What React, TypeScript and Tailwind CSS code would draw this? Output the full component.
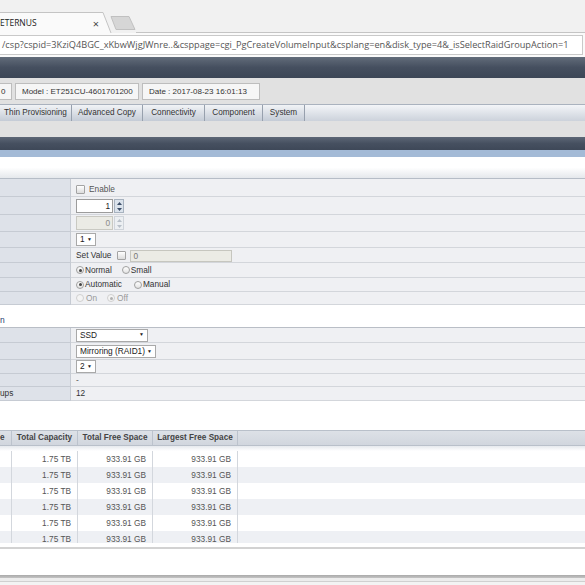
import React from "react";

const Up = ({ c = "#3d4f69" }: { c?: string }) => (
  <svg width="5" height="3" viewBox="0 0 5 3"><path d="M0 3 L2.5 0 L5 3Z" fill={c} /></svg>
);
const Down = ({ c = "#3d4f69" }: { c?: string }) => (
  <svg width="5" height="3" viewBox="0 0 5 3"><path d="M0 0 L2.5 3 L5 0Z" fill={c} /></svg>
);

function Spin({ value, disabled }: { value: string; disabled?: boolean }) {
  return (
    <div className="flex items-center">
      <div
        className={
          disabled
            ? "w-[37px] h-[14px] border border-[#c9c9c2] bg-[#ebebe5] text-[#8a8a8a] text-right pr-[2px] text-[8.3px] leading-[12px]"
            : "w-[37px] h-[14px] border border-[#9c9c9c] bg-white text-[#222] text-right pr-[2px] text-[8.3px] leading-[12px]"
        }
      >
        {value}
      </div>
      <div
        className={
          disabled
            ? "ml-[1px] w-[10px] h-[14px] flex flex-col border border-[#cfd4da] bg-[#eceff2]"
            : "ml-[1px] w-[10px] h-[14px] flex flex-col border border-[#a7b2bf] bg-[#dbe3ec]"
        }
      >
        <div className="flex-1 flex items-center justify-center">
          <Up c={disabled ? "#b8bfc8" : "#3d4f69"} />
        </div>
        <div className="flex-1 flex items-center justify-center">
          <Down c={disabled ? "#b8bfc8" : "#3d4f69"} />
        </div>
      </div>
    </div>
  );
}

function Check() {
  return <div className="w-[9px] h-[9px] rounded-[1px] border border-[#a3a3a3] bg-linear-to-b from-white to-[#dcdcdc]" />;
}

function Radio({ checked, disabled }: { checked?: boolean; disabled?: boolean }) {
  return (
    <div
      className={
        disabled
          ? "w-[8px] h-[8px] rounded-full border border-[#d0d0d0] bg-[#f4f4f4] flex items-center justify-center"
          : "w-[8px] h-[8px] rounded-full border border-[#a0a0a0] bg-linear-to-b from-white to-[#e2e2e2] flex items-center justify-center"
      }
    >
      {checked && <div className={disabled ? "w-[3px] h-[3px] rounded-full bg-[#b0b0b0]" : "w-[3px] h-[3px] rounded-full bg-[#444]"} />}
    </div>
  );
}

function Select({ text, w }: { text: string; w: string }) {
  return (
    <div className={`${w} h-[13px] border border-[#a9a9a9] bg-white flex items-center justify-between px-[3px] text-[8.3px] text-[#222]`}>
      <span>{text}</span>
      <span className="text-[5px] text-[#222]">▼</span>
    </div>
  );
}

function Row({ h, label, children, pad }: { h: string; label?: string; children?: React.ReactNode; pad?: string }) {
  return (
    <div className={`${h} flex`}>
      <div className="w-[71px] shrink-0 bg-[#dee2e9] border-b border-r border-[#c6cbd3] text-[8.3px] text-[#333] flex items-center">
        {label}
      </div>
      <div className={`flex-1 bg-[#eff0f3] border-b border-[#d3d6db] flex items-center pl-[5px] gap-[4px] text-[8.3px] text-[#444] ${pad ?? ""}`}>
        {children}
      </div>
    </div>
  );
}

const cols = ["w-[12px]", "w-[66px]", "w-[75px]", "w-[85px]"];

export default function App() {
  const rows = [0, 1, 2, 3, 4, 5];
  return (
    <div className="w-[585px] h-[585px] overflow-hidden bg-white font-['Liberation_Sans',Arial,sans-serif]">
      {/* browser tab strip */}
      <div className="h-[33px] bg-[#f1f1f1] flex items-end font-['Open_Sans',sans-serif]">
        <div className="w-[100px] h-[21px] bg-[#fafafa] border-t border-[#c4c4c4] flex items-center text-[8.5px] text-[#222]">
          <span>ETERNUS</span>
          <span className="ml-auto mr-[1px] text-[11px] text-[#444] leading-none">×</span>
        </div>
        <svg width="12" height="21" viewBox="0 0 12 21" className="shrink-0">
          <path d="M0 0.5 H3 L11 21 H0 Z" fill="#fafafa" />
          <path d="M0 0.5 H3 L11 21" fill="none" stroke="#c4c4c4" />
        </svg>
        <svg width="26" height="14" viewBox="0 0 26 14" className="shrink-0 mb-[3px] -ml-[2px]">
          <path d="M1 0.5 H19 L25 13.5 H6 Z" fill="#d6d6d6" stroke="#c0c0c0" />
        </svg>
        <div className="flex-1 h-[1px] bg-[#c4c4c4]" />
      </div>
      {/* address bar */}
      <div className="h-[24px] bg-[#fafafa] flex items-center pr-[2px]">
        <div className="w-full h-[20px] bg-white border border-l-0 border-[#c9c9c9] flex items-center pl-[2px] text-[9.2px] text-[#555] font-['Open_Sans',sans-serif] whitespace-nowrap overflow-hidden">
          /csp?cspid=3KziQ4BGC_xKbwWjgJWnre..&amp;csppage=cgi_PgCreateVolumeInput&amp;csplang=en&amp;disk_type=4&amp;_isSelectRaidGroupAction=1
        </div>
      </div>
      {/* navy header */}
      <div className="h-[21px] bg-linear-to-b from-[#626c7a] via-[#454f5f] to-[#3c4656]" />
      {/* gray area */}
      <div className="h-[59px] bg-[#e1e1e1] pt-[5px]">
        <div className="h-[17px] flex gap-[3px] text-[8px] text-[#333]">
          <div className="w-[12px] h-full bg-[#f6f6f6] border border-l-0 border-[#bdbdbd] flex items-center pl-[1px]">0</div>
          <div className="w-[124px] h-full bg-[#f6f6f6] border border-[#bdbdbd] flex items-center pl-[6px]">Model : ET251CU-4601701200</div>
          <div className="w-[118px] h-full bg-[#f6f6f6] border border-[#bdbdbd] flex items-center pl-[6px]">Date : 2017-08-23 16:01:13</div>
        </div>
        <div className="mt-[4px] h-[17px] flex text-[8.2px] text-[#333] border-t border-[#aab2be]">
          {[
            ["Thin Provisioning", "w-[72px]"],
            ["Advanced Copy", "w-[71px]"],
            ["Connectivity", "w-[62px]"],
            ["Component", "w-[58px]"],
            ["System", "w-[42px]"],
          ].map(([t, w]) => (
            <div key={t} className={`${w} h-full bg-linear-to-b from-[#f1f3f6] to-[#c4cbd6] border-r border-[#97a0ad] flex items-center justify-center`}>
              {t}
            </div>
          ))}
          <div className="flex-1 h-full bg-linear-to-b from-[#f3f5f8] to-[#ccd2db]" />
        </div>
      </div>
      {/* navy bar + blue */}
      <div className="h-[13px] bg-linear-to-b from-[#5d6776] via-[#465060] to-[#3e4858]" />
      <div className="h-[7px] bg-[#a3bad6]" />
      <div className="h-[22px] bg-linear-to-b from-white via-white to-[#e5e8ec] border-b border-[#b6bdc7]" />
      {/* form */}
      <Row h="h-[18px]" pad="pt-[4px]">
        <Check />
        <span className="text-[#555]">Enable</span>
      </Row>
      <Row h="h-[18px]" pad="pt-[1px]">
        <Spin value="1" />
      </Row>
      <Row h="h-[17px]">
        <Spin value="0" disabled />
      </Row>
      <Row h="h-[16px]">
        <Select text="1" w="w-[20px]" />
      </Row>
      <Row h="h-[15px]" pad="pt-[1px]">
        <span className="text-[#333]">Set Value</span>
        <div className="ml-[2px]"><Check /></div>
        <div className="w-[102px] h-[12px] border border-[#c6c6bf] bg-[#ebebe5] text-[#777] pl-[2px] leading-[10px]">0</div>
      </Row>
      <Row h="h-[15px]">
        <div className="flex items-center gap-[1px]"><Radio checked /><span className="text-[#333]">Normal</span></div>
        <div className="flex items-center gap-[1px] ml-[6px]"><Radio /><span className="text-[#333]">Small</span></div>
      </Row>
      <Row h="h-[14px]">
        <div className="flex items-center gap-[1px]"><Radio checked /><span className="text-[#333]">Automatic</span></div>
        <div className="flex items-center gap-[1px] ml-[8px]"><Radio /><span className="text-[#333]">Manual</span></div>
      </Row>
      <Row h="h-[13px]">
        <div className="flex items-center gap-[2px]"><Radio disabled /><span className="text-[#999]">On</span></div>
        <div className="flex items-center gap-[2px] ml-[6px]"><Radio checked disabled /><span className="text-[#999]">Off</span></div>
      </Row>
      <div className="h-[23px] bg-white border-b border-[#b9bec6] flex items-end pb-[0px] text-[8.5px] text-[#1f3d70]">n</div>
      <Row h="h-[15px]">
        <Select text="SSD" w="w-[72px]" />
      </Row>
      <Row h="h-[17px]" pad="pt-[1px]">
        <Select text="Mirroring (RAID1)" w="w-[80px]" />
      </Row>
      <Row h="h-[14px]">
        <Select text="2" w="w-[20px]" />
      </Row>
      <Row h="h-[13px]">
        <span className="text-[#555]">-</span>
      </Row>
      <Row h="h-[14px]" label="ups">
        <span className="text-[#333]">12</span>
      </Row>
      <div className="h-[29px] bg-white" />
      {/* table */}
      <div className="h-[113px] overflow-hidden">
        <div className="h-[16px] flex bg-linear-to-b from-[#dde1e7] to-[#d1d6de] border-t border-b border-[#b9c0ca] text-[8.2px] font-bold text-[#444]">
          <div className={`${cols[0]} border-r border-[#bcc3cd] flex items-center`}>e</div>
          <div className={`${cols[1]} border-r border-[#bcc3cd] flex items-center justify-center`}>Total Capacity</div>
          <div className={`${cols[2]} border-r border-[#bcc3cd] flex items-center justify-center`}>Total Free Space</div>
          <div className={`${cols[3]} border-r border-[#bcc3cd] flex items-center justify-center`}>Largest Free Space</div>
          <div className="flex-1" />
        </div>
        <div className="h-[5px] bg-linear-to-b from-[#e6e9ee] to-white" />
        {rows.map((i) => (
          <div key={i} className={`h-[16px] flex text-[8.3px] text-[#555] ${i % 2 === 1 ? "bg-[#eef0f4]" : "bg-white"}`}>
            <div className={`${cols[0]} border-r border-[#d3d7dd]`} />
            <div className={`${cols[1]} border-r border-[#d3d7dd] flex items-center justify-end pr-[6px]`}>1.75 TB</div>
            <div className={`${cols[2]} border-r border-[#d3d7dd] flex items-center justify-end pr-[6px]`}>933.91 GB</div>
            <div className={`${cols[3]} border-r border-[#d3d7dd] flex items-center justify-end pr-[6px]`}>933.91 GB</div>
            <div className="flex-1" />
          </div>
        ))}
      </div>
      <div className="h-[4px] bg-white" />
      <div className="h-[2px] bg-[#d2d2d2]" />
      <div className="h-[26px] bg-white" />
      <div className="h-[3px] bg-linear-to-b from-[#a9a9a9] to-[#c4c4c4]" />
      <div className="h-[4px] bg-[#ececec] border-b border-[#d0d0d0]" />
      <div className="h-[3px] bg-[#f3f3f3]" />
    </div>
  );
}
